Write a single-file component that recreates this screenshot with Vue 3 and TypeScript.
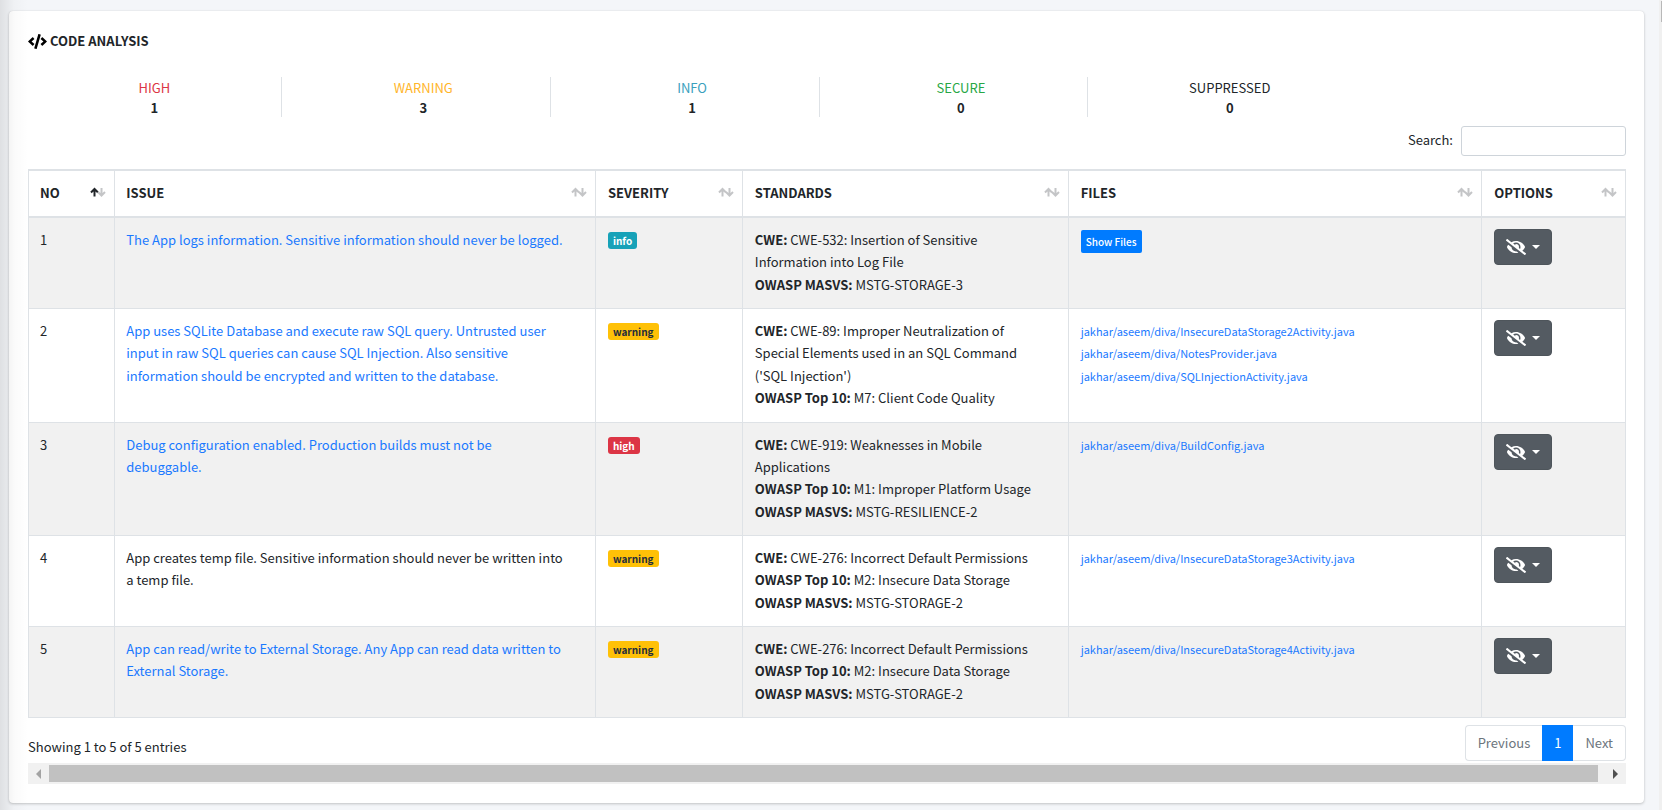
<script setup lang="ts">
import { ref } from 'vue'

interface Standard { label: string; value: string }
interface Finding {
  no: number
  issue: string
  linked: boolean
  severity: 'info' | 'warning' | 'high'
  standards: Standard[]
  files: string[]
  collapsed?: boolean
}

const search = ref('')

const stats = [
  { label: 'HIGH', count: 1, tone: 'danger' },
  { label: 'WARNING', count: 3, tone: 'warn' },
  { label: 'INFO', count: 1, tone: 'teal' },
  { label: 'SECURE', count: 0, tone: 'green' },
  { label: 'SUPPRESSED', count: 0, tone: 'plain' },
]

const columns = ['NO', 'ISSUE', 'SEVERITY', 'STANDARDS', 'FILES', 'OPTIONS']

const findings: Finding[] = [
  {
    no: 1,
    issue: 'The App logs information. Sensitive information should never be logged.',
    linked: true,
    severity: 'info',
    standards: [
      { label: 'CWE:', value: 'CWE-532: Insertion of Sensitive\nInformation into Log File' },
      { label: 'OWASP MASVS:', value: 'MSTG-STORAGE-3' },
    ],
    files: [],
    collapsed: true,
  },
  {
    no: 2,
    issue: 'App uses SQLite Database and execute raw SQL query. Untrusted user\ninput in raw SQL queries can cause SQL Injection. Also sensitive\ninformation should be encrypted and written to the database.',
    linked: true,
    severity: 'warning',
    standards: [
      { label: 'CWE:', value: "CWE-89: Improper Neutralization of\nSpecial Elements used in an SQL Command\n('SQL Injection')" },
      { label: 'OWASP Top 10:', value: 'M7: Client Code Quality' },
    ],
    files: [
      'jakhar/aseem/diva/InsecureDataStorage2Activity.java',
      'jakhar/aseem/diva/NotesProvider.java',
      'jakhar/aseem/diva/SQLInjectionActivity.java',
    ],
  },
  {
    no: 3,
    issue: 'Debug configuration enabled. Production builds must not be\ndebuggable.',
    linked: true,
    severity: 'high',
    standards: [
      { label: 'CWE:', value: 'CWE-919: Weaknesses in Mobile\nApplications' },
      { label: 'OWASP Top 10:', value: 'M1: Improper Platform Usage' },
      { label: 'OWASP MASVS:', value: 'MSTG-RESILIENCE-2' },
    ],
    files: ['jakhar/aseem/diva/BuildConfig.java'],
  },
  {
    no: 4,
    issue: 'App creates temp file. Sensitive information should never be written into\na temp file.',
    linked: false,
    severity: 'warning',
    standards: [
      { label: 'CWE:', value: 'CWE-276: Incorrect Default Permissions' },
      { label: 'OWASP Top 10:', value: 'M2: Insecure Data Storage' },
      { label: 'OWASP MASVS:', value: 'MSTG-STORAGE-2' },
    ],
    files: ['jakhar/aseem/diva/InsecureDataStorage3Activity.java'],
  },
  {
    no: 5,
    issue: 'App can read/write to External Storage. Any App can read data written to\nExternal Storage.',
    linked: true,
    severity: 'warning',
    standards: [
      { label: 'CWE:', value: 'CWE-276: Incorrect Default Permissions' },
      { label: 'OWASP Top 10:', value: 'M2: Insecure Data Storage' },
      { label: 'OWASP MASVS:', value: 'MSTG-STORAGE-2' },
    ],
    files: ['jakhar/aseem/diva/InsecureDataStorage4Activity.java'],
  },
]
</script>

<template>
  <main class="page">
    <section class="card">
      <h1 class="title">
        <svg class="code-icon" viewBox="0 0 640 512" aria-hidden="true">
          <path d="M278.900 511.500l-61-17.700c-6.400-1.800-10-8.500-8.200-14.900L346.200 8.700c1.800-6.400 8.500-10 14.900-8.200l61 17.700c6.400 1.800 10 8.500 8.200 14.900L293.800 503.300c-1.900 6.400-8.500 10.100-14.900 8.200zm-114-112.200l43.500-46.400c4.600-4.900 4.300-12.700-.8-17.200L117 256l90.600-79.700c5.100-4.500 5.500-12.300.8-17.200l-43.500-46.400c-4.500-4.800-12.100-5.100-17-.5L3.800 247.200c-5.100 4.700-5.100 12.800 0 17.500l144.100 135.100c4.900 4.600 12.500 4.400 17-.5zm327.200.6l144.100-135.100c5.100-4.700 5.100-12.800 0-17.500L492.100 112.100c-4.800-4.500-12.400-4.300-17 .5L431.600 159c-4.600 4.900-4.300 12.700.8 17.200L523 256l-90.600 79.700c-5.100 4.500-5.500 12.300-.8 17.200l43.500 46.400c4.500 4.900 12.100 5.100 17 .6z" />
        </svg>
        <span>CODE ANALYSIS</span>
      </h1>

      <div class="stats">
        <div v-for="s in stats" :key="s.label" class="stat">
          <span :class="s.tone">{{ s.label }}</span>
          <strong>{{ s.count }}</strong>
        </div>
      </div>

      <div class="filter">
        <label for="table-search">Search:</label>
        <input id="table-search" v-model="search" type="search" />
      </div>

      <table class="findings">
        <colgroup>
          <col v-for="c in columns" :key="c" :class="'col-' + c.toLowerCase()" />
        </colgroup>
        <thead>
          <tr>
            <th v-for="(c, i) in columns" :key="c" scope="col">
              <span class="head">
                <span>{{ c }}</span>
                <svg class="sort" viewBox="0 0 16 12" aria-hidden="true">
                  <path :class="{ active: i === 0 }" d="M4.500 9.500V2M1 5.500L4.500 2L8 5.500" />
                  <path d="M11.500 1V8.500M8 5L11.500 8.500L15 5" />
                </svg>
              </span>
            </th>
          </tr>
        </thead>
        <tbody>
          <tr v-for="f in findings" :key="f.no">
            <td>{{ f.no }}</td>
            <td class="lines"><a v-if="f.linked" href="#">{{ f.issue }}</a><template v-else>{{ f.issue }}</template></td>
            <td><span class="badge" :class="f.severity">{{ f.severity }}</span></td>
            <td>
              <div v-for="s in f.standards" :key="s.label" class="lines"><strong>{{ s.label }}</strong> {{ s.value }}</div>
            </td>
            <td>
              <button v-if="f.collapsed" type="button" class="show">Show Files</button>
              <div v-for="p in f.files" :key="p"><a href="#" class="file">{{ p }}</a></div>
            </td>
            <td>
              <button type="button" class="hide" aria-label="Suppress finding">
                <svg class="eye" viewBox="0 0 640 512" aria-hidden="true">
                  <path d="M320 400c-75.850 0-137.250-58.710-142.900-133.110L72.200 185.820c-13.790 17.300-26.480 35.590-36.720 55.590a32.350 32.350 0 0 0 0 29.190C89.710 376.410 197.070 448 320 448c26.910 0 52.870-4 77.890-10.460L346 397.390a144.130 144.130 0 0 1-26 2.610zm313.820 58.100l-110.550-85.440a331.250 331.250 0 0 0 81.250-102.070 32.350 32.350 0 0 0 0-29.190C550.290 135.590 442.930 64 320 64a308.150 308.150 0 0 0-147.320 37.700L45.460 3.370A16 16 0 0 0 23 6.180L3.370 31.450A16 16 0 0 0 6.180 53.900l588.360 454.730a16 16 0 0 0 22.460-2.810l19.640-25.270a16 16 0 0 0-2.820-22.450zm-183.720-142l-39.300-30.380A94.750 94.750 0 0 0 416 256a94.760 94.760 0 0 0-121.310-92.210A47.650 47.650 0 0 1 304 192a46.640 46.640 0 0 1-1.540 10l-73.610-56.890A142.310 142.310 0 0 1 320 112a143.920 143.920 0 0 1 144 144c0 21.630-5.290 41.790-13.900 60.110z" />
                </svg>
                <svg class="caret" viewBox="0 0 8 4" aria-hidden="true"><path d="M0 0H8L4 4Z" /></svg>
              </button>
            </td>
          </tr>
        </tbody>
      </table>

      <div class="foot">
        <span class="summary">Showing 1 to 5 of 5 entries</span>
        <nav class="pager" aria-label="Table pages">
          <button type="button">Previous</button>
          <button type="button" class="current">1</button>
          <button type="button">Next</button>
        </nav>
      </div>

      <div class="scroller" aria-hidden="true">
        <svg class="arrow dim" viewBox="0 0 5 10"><path d="M5 0V10L0 5Z" /></svg>
        <div class="thumb"></div>
        <svg class="arrow" viewBox="0 0 5 10"><path d="M0 0V10L5 5Z" /></svg>
      </div>
    </section>
  </main>
</template>

<style>
body {
  background: #f4f6f9;
}
</style>

<style scoped>
* {
  box-sizing: border-box;
}
.page {
  position: relative;
  min-height: 100vh;
  padding: 11px 15px 7px 9px;
  border-right: 3px solid #f0f0f0;
  background: #f4f6f9;
  color: #212529;
  font-family: "Noto Sans CJK SC", "Noto Sans", sans-serif;
  font-size: 13px;
  line-height: 20px;
}
/* Soft shadow cast by the sidebar edge */
.page::before {
  content: "";
  position: absolute;
  inset: 0 auto 0 0;
  width: 28px;
  background: linear-gradient(to right, rgba(0, 0, 0, 0.09), rgba(0, 0, 0, 0.02) 50%, rgba(0, 0, 0, 0));
  pointer-events: none;
}
/* Page scroll thumb */
.page::after {
  content: "";
  position: absolute;
  top: 1px;
  right: -3px;
  width: 1px;
  height: 21px;
  background: #b8b8b8;
}
.card {
  padding: 20px 18px 19px 19px;
  border-radius: 4px;
  background: #fff;
  box-shadow: 0 0 1px rgba(0, 0, 0, 0.13), 0 1px 3px rgba(0, 0, 0, 0.2);
}
.title {
  display: flex;
  align-items: center;
  gap: 3px;
  margin: 0;
  font-size: 13px;
  line-height: 20px;
}
.code-icon {
  width: 19px;
  height: 15px;
}
.stats {
  display: grid;
  grid-template-columns: repeat(6, 1fr);
  margin: 26px 0 8px -15px;
}
.stat {
  display: flex;
  flex-direction: column;
  align-items: center;
  height: 40px;
  padding: 1px 0 0 15px;
  border-right: 1px solid #dee2e6;
}
.stat:last-child {
  border-right-color: transparent;
}
.danger { color: #dc3545; }
.warn { color: #ffb52b; }
.teal { color: #3aa0bd; }
.green { color: #28a745; }
.filter {
  display: flex;
  justify-content: flex-end;
  align-items: center;
  gap: 8px;
  margin: 9px 0 13px;
}
.filter label {
  padding-bottom: 2px;
}
.filter input {
  width: 165px;
  height: 30px;
  padding: 4px 8px;
  border: 1px solid #ced4da;
  border-radius: 3px;
  background: #fff;
  font: inherit;
}
.findings {
  width: 100%;
  border-collapse: collapse;
  table-layout: fixed;
  line-height: 1.72;
}
.col-no { width: 5.4%; }
.col-issue { width: 30.1%; }
.col-severity { width: 9.2%; }
.col-standards { width: 20.4%; }
.col-files { width: 25.9%; }
.col-options { width: 9%; }
th {
  height: 47px;
  padding: 0 8px 0 12px;
  border: 1px solid #dee2e6;
  border-width: 2px 1px;
  text-align: left;
}
.head {
  display: flex;
  justify-content: space-between;
  align-items: center;
}
.sort {
  width: 16px;
  height: 12px;
  fill: none;
  stroke: #c4c5c7;
  stroke-width: 2;
}
.sort .active {
  stroke: #212529;
}
td {
  padding: 11px 12px 12px;
  border: 1px solid #dee2e6;
  vertical-align: top;
}
th:nth-child(-n + 2),
td:nth-child(-n + 2) {
  padding-left: 11px;
}
.lines {
  white-space: pre-line;
}
tbody tr:nth-child(odd) {
  background: #f1f1f1;
}
a {
  color: #1a79ff;
  text-decoration: none;
}
.file {
  font-size: 11px;
}
.badge {
  display: inline-block;
  padding: 0 5px;
  border-radius: 3px;
  font-size: 10px;
  font-weight: 700;
  line-height: 17px;
}
.badge.info { background: #17a2b8; color: #fff; }
.badge.warning { background: #ffc107; color: #1f2d3d; }
.badge.high { background: #dc3545; color: #fff; }
button {
  font: inherit;
  cursor: pointer;
}
.show {
  display: block;
  height: 23px;
  margin-top: 1px;
  padding: 0 5px;
  border: 0;
  border-radius: 2px;
  background: #007bff;
  color: #fff;
  font-size: 10px;
  font-weight: 500;
}
.hide {
  display: flex;
  align-items: center;
  gap: 6px;
  width: 58px;
  height: 36px;
  padding: 0 11px;
  border: 1px solid #4e555b;
  border-radius: 4px;
  background: #545b62;
}
.hide svg {
  flex: none;
  fill: #fff;
}
.eye {
  width: 20px;
  height: 16px;
}
.caret {
  width: 8px;
  height: 4px;
}
.foot {
  display: flex;
  justify-content: space-between;
  align-items: center;
  margin-top: 7px;
}
.summary {
  padding-top: 8px;
}
.pager {
  display: flex;
}
.pager button {
  height: 36px;
  padding: 0 12px;
  border: 1px solid #dee2e6;
  background: #fff;
  color: #6c757d;
}
.pager button:first-child {
  border-right: 0;
  border-radius: 4px 0 0 4px;
}
.pager button:last-child {
  border-left: 0;
  border-radius: 0 4px 4px 0;
}
.pager .current {
  padding: 0 11px;
  border-color: #007bff;
  background: #007bff;
  color: #fff;
}
.scroller {
  display: flex;
  align-items: center;
  gap: 8px;
  height: 21px;
  margin-top: 2px;
  padding: 0 8px;
  background: #f1f1f1;
}
.thumb {
  flex: 1;
  height: 17px;
  margin-right: 7px;
  background: #c1c1c1;
}
.arrow {
  width: 5px;
  height: 10px;
  fill: #505050;
}
.arrow.dim {
  fill: #a3a3a3;
}
</style>
